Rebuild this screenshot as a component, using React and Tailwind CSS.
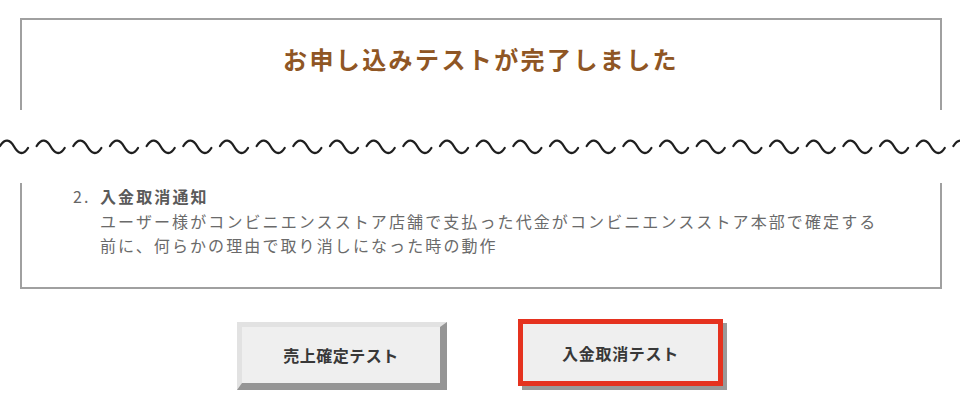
const font = { fontFamily: '"Noto Sans CJK JP", "Noto Sans", sans-serif' }

function Wave() {
  const waves = []
  for (let i = 0; i < 27; i++) {
    const x = i * 36.67
    waves.push(
      <path
        key={i}
        d={`M${x} 146 C${x + 5} 138 ${x + 10} 139.5 ${x + 14} 146.5 S${x + 23} 156 ${x + 28} 148`}
      />
    )
  }
  return (
    <svg width="960" height="73" viewBox="0 110 960 73" className="block">
      <g fill="none" stroke="#1f1f1f" strokeWidth="2.3" strokeLinecap="round">
        {waves}
      </g>
    </svg>
  )
}

export default function App() {
  return (
    <div className="h-[416px] w-[960px] overflow-hidden bg-white pt-[18px]" style={font}>
      <div className="ml-[20px] h-[92px] w-[922px] border-2 border-b-0 border-[#a0a0a0] pt-[22px] text-center">
        <h1 className="text-[24px] font-bold leading-[34px] tracking-[2.4px] text-[#8f5624]">
          お申し込みテストが完了しました
        </h1>
      </div>

      <Wave />

      <div className="ml-[20px] h-[106px] w-[922px] border-2 border-t-0 border-[#a0a0a0] pl-[51px] pt-px text-[16px] leading-[24.5px] tracking-[2.1px] whitespace-nowrap">
        <div className="font-bold text-[#5a5a5a]">
          <span className="inline-block w-[27px] font-normal text-[#666]">2.</span>
          入金取消通知
        </div>
        <div className="pl-[27px] text-[#6a6a6a]">
          ユーザー様がコンビニエンスストア店舗で支払った代金がコンビニエンスストア本部で確定する
        </div>
        <div className="pl-[27px] text-[#6a6a6a]">
          前に、何らかの理由で取り消しになった時の動作
        </div>
      </div>

      <div className="mt-[30px] flex items-start justify-center gap-[71px]">
        <button className="mt-[3px] flex h-[68px] w-[210px] items-center justify-center border-t-[5px] border-r-[7px] border-b-[7px] border-l-[5px] border-t-[#e2e2e2] border-r-[#959595] border-b-[#959595] border-l-[#e2e2e2] bg-[#efefef] text-[16px] font-bold tracking-[0.5px] text-[#383838]">
          売上確定テスト
        </button>
        <button className="flex h-[67px] w-[205px] items-center justify-center border-[5px] border-[#e5321f] bg-[#efefef] text-[16px] font-bold tracking-[0.7px] text-[#383838] shadow-[4px_4px_0_#9a9a9a]">
          入金取消テスト
        </button>
      </div>
    </div>
  )
}
